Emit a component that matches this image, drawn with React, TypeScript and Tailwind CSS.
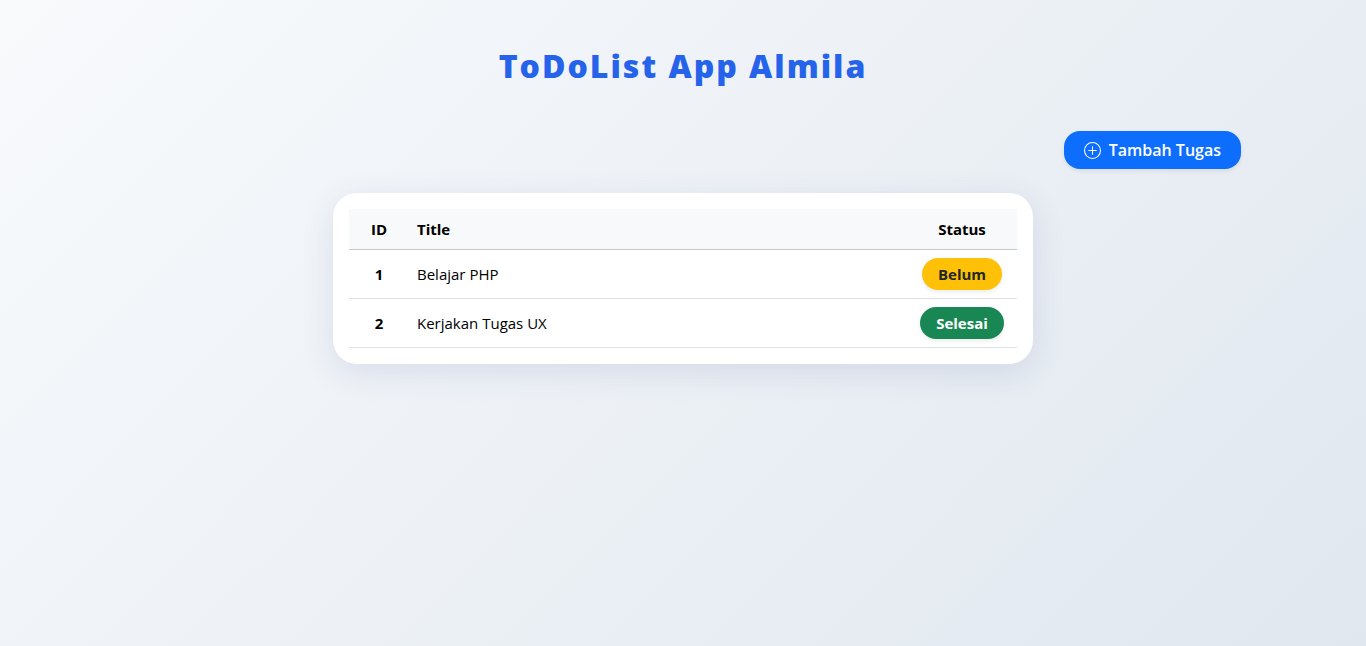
import { BsPlusCircle } from "react-icons/bs";

type Task = { id: number; title: string; done: boolean };

const tasks: Task[] = [
  { id: 1, title: "Belajar PHP", done: false },
  { id: 2, title: "Kerjakan Tugas UX", done: true },
];

function StatusBadge({ done }: { done: boolean }) {
  return (
    <span
      className={`inline-block rounded-2xl px-4 py-1 text-[15px] leading-6 font-bold shadow-[0_2px_4px_rgba(0,0,0,0.08)] ${
        done ? "bg-[#198754] text-white" : "bg-[#ffc107] text-[#212529]"
      }`}
    >
      {done ? "Selesai" : "Belum"}
    </span>
  );
}

export default function App() {
  return (
    <div className="min-h-screen bg-[linear-gradient(135deg,#f8fafc_0%,#e0e7ef_100%)] font-['Open_Sans','Noto_Sans',sans-serif] text-[15px] leading-6 text-black">
      <main className="mx-auto max-w-[1140px] px-3 py-12">
        <h1 className="mb-12 text-center text-[32px] leading-[35px] font-extrabold tracking-[2px] text-[#2563eb]">
          ToDoList App Almila
        </h1>
        <div className="mb-6 flex justify-end">
          <button
            type="button"
            className="flex items-center gap-2 rounded-2xl bg-[#0d6efd] px-5 py-[7px] text-base leading-6 font-semibold text-white shadow-[0_2px_4px_rgba(0,0,0,0.08)]"
          >
            <BsPlusCircle className="size-[17px]" aria-hidden="true" />
            Tambah Tugas
          </button>
        </div>
        <section className="mx-auto max-w-[700px] rounded-3xl bg-white p-4 shadow-[0_8px_32px_rgba(60,72,150,0.13)]">
          <table className="w-full table-fixed border-collapse">
            <thead>
              <tr className="border-b border-[#c6c7c8] bg-[#f8f9fa]">
                <th scope="col" className="w-[60px] p-2 text-center font-bold">ID</th>
                <th scope="col" className="p-2 text-left font-bold">Title</th>
                <th scope="col" className="w-[110px] p-2 text-center font-bold">Status</th>
              </tr>
            </thead>
            <tbody>
              {tasks.map((task) => (
                <tr key={task.id} className="border-b border-[#dee2e6]">
                  <th scope="row" className="p-2 text-center font-bold">{task.id}</th>
                  <td className="p-2">{task.title}</td>
                  <td className="p-2 text-center">
                    <StatusBadge done={task.done} />
                  </td>
                </tr>
              ))}
            </tbody>
          </table>
        </section>
      </main>
    </div>
  );
}
